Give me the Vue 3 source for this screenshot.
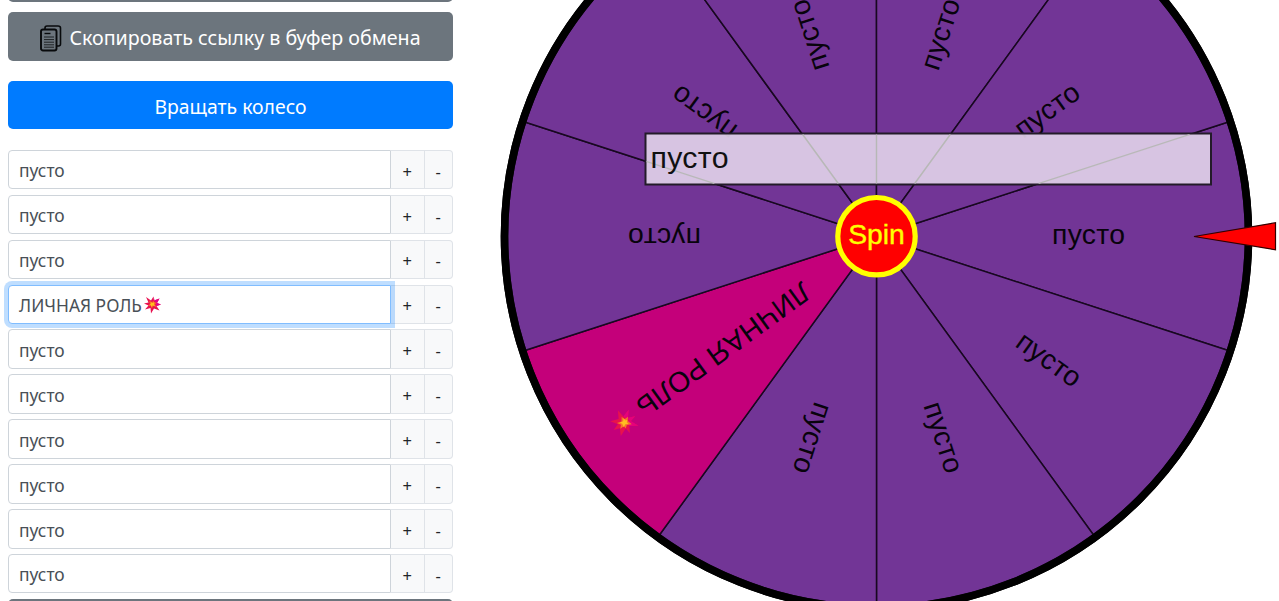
<script setup>
  import { ref } from 'vue';

  const items = ref([
    { id: 1, title: 'пусто' },
    { id: 2, title: 'пусто' },
    { id: 3, title: 'пусто' },
    { id: 4, title: 'ЛИЧНАЯ РОЛЬ', boom: true },
    { id: 5, title: 'пусто' },
    { id: 6, title: 'пусто' },
    { id: 7, title: 'пусто' },
    { id: 8, title: 'пусто' },
    { id: 9, title: 'пусто' },
    { id: 10, title: 'пусто' }
  ]);
  const activeId = ref(4);

  const cx = 396.5;
  const cy = 236.2;
  const radius = 369;

  // first sector of the wheel looks to the right, the rest go clockwise
  const sectors = [0, 36, 72, 108, 144, 180, 216, 252, 288, 324].map((angle) => ({
    angle,
    boom: angle === 144,
    title: angle === 144 ? 'ЛИЧНАЯ РОЛЬ' : 'пусто'
  }));

  const point = (deg) => {
    const rad = deg * Math.PI / 180;
    return `${(cx + radius * Math.cos(rad)).toFixed(2)} ${(cy + radius * Math.sin(rad)).toFixed(2)}`;
  };

  const sectorPath = (angle) =>
    `M${cx} ${cy}L${point(angle - 18)}A${radius} ${radius} 0 0 1 ${point(angle + 18)}Z`;

  const addItem = (index) => {
    items.value.splice(index + 1, 0, { id: Date.now(), title: 'пусто' });
  };

  const removeItem = (index) => {
    items.value.splice(index, 1);
  };
</script>

<template>
  <div class="page">
    <div class="panel">
      <button type="button" class="btn btn-secondary btn-top"></button>
      <button type="button" class="btn btn-secondary btn-copy">
        <svg class="copy-icon" width="22" height="28" viewBox="0 0 22 28">
          <path d="M5 4V3Q5 1 7 1H18Q20.5 1 20.5 3V19Q20.5 21 18.5 21H17" fill="none" stroke="#080a0c" stroke-width="1.6" />
          <rect x="1" y="4.5" width="15.5" height="21" rx="2" fill="none" stroke="#080a0c" stroke-width="1.9" />
          <path d="M4.5 8.5H10.5" stroke="#080a0c" stroke-width="1.4" />
          <path d="M4 12H14M4 14.6H14M4 17.2H14M4 19.8H14M4 22.2H14" stroke="#15181b" stroke-width=".9" />
        </svg>
        <span class="copy-text">Скопировать ссылку в буфер обмена</span>
      </button>
      <button type="button" class="btn btn-primary"><span class="spin-text">Вращать колесо</span></button>

      <div class="list">
        <div v-for="(item, index) in items" :key="item.id" class="input-group">
          <div class="form-control" :class="{ focused: item.id === activeId }" @click="activeId = item.id">
            <span>{{ item.title }}</span>
            <svg v-if="item.boom" class="boom" width="17" height="18" viewBox="0 0 34 36">
              <path d="M4 2L14 9L19 1L20 9L31 5L26 14L34 17L25 20L31 29L20 25L14 35L13 24L2 27L9 19L0 15L9 13Z" fill="#e81250" />
              <path d="M19 1L20 9L31 5L26 14L34 17L25 20L23 15Z" fill="#e3008c" />
              <path d="M10 9L16 12L20 9L20 13L26 13L22 17L25 22L19 20L15 25L14 20L8 20L12 16Z" fill="#f7622c" />
              <path d="M13 12L17 14L21 12L20 17L22 20L17 19L14 22L14 18L11 17L14 15Z" fill="#ffc020" />
            </svg>
          </div>
          <button type="button" class="addon plus" @click="addItem(index)">+</button>
          <button type="button" class="addon minus" @click="removeItem(index)">-</button>
        </div>
      </div>
      <button type="button" class="btn btn-secondary btn-bottom"></button>
    </div>

    <svg class="wheel" width="799" height="601" viewBox="0 0 799 601">
      <circle :cx="cx" :cy="cy" r="372" fill="#723596" stroke="#000" stroke-width="7.6" />
      <path
        v-for="s in sectors"
        :key="'p' + s.angle"
        :d="sectorPath(s.angle)"
        :fill="s.boom ? '#c4007a' : '#723596'"
        stroke="#180820"
        stroke-width="1.5"
      />
      <circle :cx="cx" :cy="cy" r="372" fill="none" stroke="#000" stroke-width="7.6" />
      <g v-for="s in sectors" :key="'t' + s.angle" :transform="`translate(${cx} ${cy}) rotate(${s.angle})`">
        <text v-if="!s.boom" class="label" x="175.5" y="7.8" textLength="73">{{ s.title }}</text>
        <template v-else>
          <text class="label" x="87" y="8" textLength="207">{{ s.title }}</text>
          <g transform="translate(301 -15) scale(.75)">
            <path d="M4 2L14 9L19 1L20 9L31 5L26 14L34 17L25 20L31 29L20 25L14 35L13 24L2 27L9 19L0 15L9 13Z" fill="#e8124c" />
            <path d="M4 2L14 9L12 16L9 13L0 15L9 19L2 27L13 24Z" fill="#e6007e" />
            <path d="M10 9L16 12L20 9L20 13L26 13L22 17L25 22L19 20L15 25L14 20L8 20L12 16Z" fill="#f7752c" />
            <path d="M13 12L17 14L21 12L20 17L22 20L17 19L14 22L14 18L11 17L14 15Z" fill="#ffc020" />
          </g>
        </template>
      </g>

      <path d="M714 236.5L795.5 222.7V249.8Z" fill="#f00" stroke="#300" stroke-width="1.2" />

      <rect x="165.5" y="133.5" width="565.5" height="51" fill="#dfd0e7" fill-opacity=".93" stroke="#231b29" stroke-width="2" />
      <!-- sector lines showing through the result plate -->
      <path
        d="M166.5 161.5L234.3 183.5M322.7 134.5L358.3 183.5M396.5 134.5V183.5M470.3 134.5L434.7 183.5M709.5 134.5L558.7 183.5"
        fill="none"
        stroke="#b7b8b6"
        stroke-width="1.3"
      />
      <text class="result" x="170.5" y="168" textLength="78">пусто</text>

      <circle :cx="cx" :cy="cy" r="38.7" fill="#f00" stroke="#ff0" stroke-width="5.2" />
      <text class="hub" :x="cx" y="244" text-anchor="middle">Spin</text>
    </svg>
  </div>
</template>

<style>
  html,
  body {
    margin: 0;
    overflow: hidden;
    background: #fff;
  }
</style>

<style scoped>
  .page {
    display: flex;
    height: 601px;
    overflow: hidden;
    font-family: "Noto Sans", "Open Sans", sans-serif;
  }

  .panel {
    display: flex;
    flex-direction: column;
    flex: none;
    box-sizing: border-box;
    width: 480px;
    padding: 0 27px 0 8px;
  }

  .btn {
    display: flex;
    align-items: center;
    justify-content: center;
    flex: none;
    box-sizing: border-box;
    width: 445px;
    padding: 0;
    border: 0;
    border-radius: 5px;
    color: #fff;
    font-family: inherit;
    font-size: 20px;
    white-space: nowrap;
  }

  .btn-secondary {
    background-color: #6c757d;
  }

  .btn-primary {
    height: 48px;
    margin-top: 20.5px;
    background-color: #007bff;
  }

  .btn-top {
    height: 20px;
    margin-top: -18.3px;
  }

  .btn-copy {
    height: 48.7px;
    margin-top: 10.3px;
    gap: 7px;
  }

  .copy-icon {
    margin-top: 5px;
  }

  .copy-text {
    margin-top: 2px;
    font-size: 19.65px;
  }

  .spin-text {
    margin-top: 3px;
    font-size: 19.4px;
  }

  .btn-bottom {
    height: 40px;
    margin-top: 5.2px;
  }

  .list {
    display: grid;
    gap: 5.4px;
    margin-top: 20.7px;
  }

  .input-group {
    display: flex;
    height: 39.5px;
  }

  .form-control {
    display: flex;
    align-items: center;
    gap: 2px;
    box-sizing: border-box;
    width: 383px;
    padding: 3px 10px 0;
    border: 1px solid #ced4da;
    border-radius: 4px 0 0 4px;
    background: #fff;
    color: #495057;
    font-size: 17.4px;
    line-height: 1;
  }

  .form-control.focused {
    position: relative;
    border-color: #80bdff;
    box-shadow: 0 0 0 4px rgba(0, 123, 255, .25);
  }

  .boom {
    margin-top: -2px;
  }

  .addon {
    box-sizing: border-box;
    padding: 3px 0 0;
    border: 1px solid #dfe3e8;
    border-left: 0;
    background: #f8f9fa;
    color: #212529;
    font-family: inherit;
    font-size: 16.5px;
  }

  .plus {
    width: 33.5px;
  }

  .minus {
    width: 28.5px;
    border-radius: 0 4px 4px 0;
  }

  .wheel {
    flex: none;
    display: block;
  }

  .label {
    fill: #08030c;
    font: 28.3px "Liberation Sans", Arial, sans-serif;
  }

  .result {
    fill: #111;
    font: 30.3px "Liberation Sans", Arial, sans-serif;
  }

  .hub {
    fill: #ff0;
    stroke: #ff0;
    stroke-width: .4;
    font: 28.3px "Liberation Sans", Arial, sans-serif;
  }
</style>
